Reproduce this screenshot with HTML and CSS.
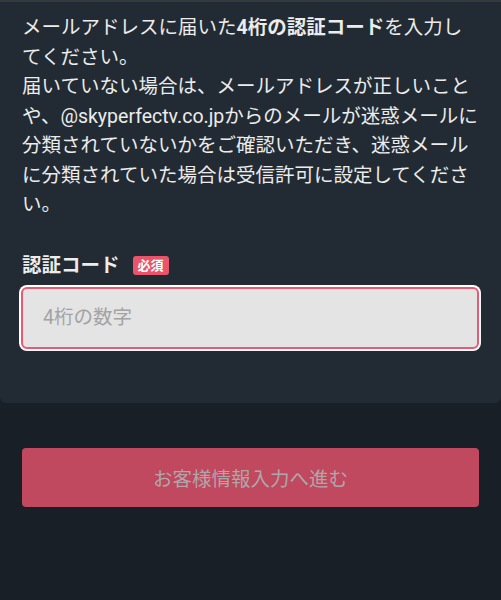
FILE: index.html
```html
<!DOCTYPE html>
<html>
<head>
  <meta charset="utf-8">
  <title>認証コード入力</title>
  <link rel="stylesheet" href="styles.css">
</head>
<body>
  <div class="card">
    <p class="lead">メールアドレスに届いた<b>4桁の認証コード</b>を入力してください。<br>届いていない場合は、メールアドレスが正しいことや、@skyperfectv.co.jpからのメールが迷惑メールに分類されていないかをご確認いただき、迷惑メールに分類されていた場合は受信許可に設定してください。</p>
    <label class="field-label" for="code">認証コード<span class="badge">必須</span></label>
    <input type="text" id="code" class="code-input" placeholder="4桁の数字" autofocus>
  </div>
  <button class="submit">お客様情報入力へ進む</button>
</body>
</html>
```

FILE: styles.css
```css
html, body {
  margin: 0;
  background-color: #181f27;
  font-family: Roboto, "Noto Sans CJK JP", sans-serif;
}
.card {
  display: flex;
  flex-direction: column;
  background-color: #222b33;
  border-top: 2px solid #34393e;
  border-radius: 0 0 6px 6px;
  padding: 11px 20px 54px 22px;
}
.lead {
  margin: 0;
  color: #ececec;
  font-size: 19.5px;
  line-height: 29.5px;
}
.lead b {
  font-weight: bold;
}
.field-label {
  display: flex;
  align-items: center;
  gap: 13px;
  margin-top: 33px;
  color: #ececec;
  font-size: 19.5px;
  font-weight: bold;
  line-height: 26px;
}
.badge {
  display: inline-block;
  background-color: #e9546b;
  color: #fff;
  border-radius: 3px;
  padding: 0 5px;
  height: 19px;
  line-height: 19px;
  font-size: 13px;
  font-weight: bold;
}
.code-input {
  box-sizing: border-box;
  margin: 8px 0 0 -1px;
  width: 458px;
  height: 62px;
  border: 2px solid #ea5873;
  border-radius: 6px;
  box-shadow: 0 0 0 2px #fff;
  outline: none;
  background-color: #e4e4e4;
  padding: 0 20px;
  font-family: Roboto, "Noto Sans CJK JP", sans-serif;
  font-size: 19.5px;
  color: #333;
  caret-color: #555;
}
.code-input::placeholder {
  color: #a3a3a3;
}
.submit {
  display: block;
  box-sizing: border-box;
  margin: 45px 22px 0 22px;
  width: 457px;
  height: 59px;
  border: 0;
  border-radius: 4px;
  background-color: #c0485f;
  color: #b0a6a9;
  font-family: Roboto, "Noto Sans CJK JP", sans-serif;
  font-size: 19.5px;
}
```
